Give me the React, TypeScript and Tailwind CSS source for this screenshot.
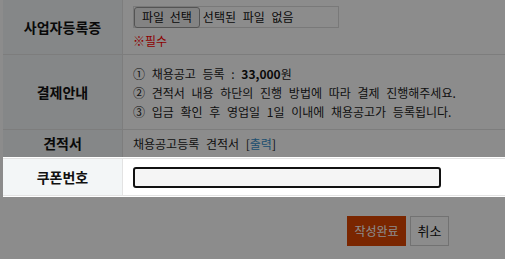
import React from "react";

export default function App() {
  const label =
    "w-[120px] shrink-0 border-r border-[#e3e3e3] bg-[#f3f6f7] flex items-center justify-center text-[14px] font-bold text-[#111] [word-spacing:0px]";
  return (
    <div className="w-[505px] h-[259px] overflow-hidden bg-white font-['Noto_Sans_CJK_KR',sans-serif] text-[12px] text-[#222] [word-spacing:4px]">
      <div className="ml-[3px]">
        {/* Row 1 */}
        <div className="flex h-[55px] border-b border-[#e3e3e3]">
          <div className={label}>사업자등록증</div>
          <div className="pl-[10px] pt-[6px]">
            <div className="flex h-[22px] w-[206px] items-center border border-[#dcdcdc]">
              <span className="flex h-[21px] items-center rounded-[3px] border border-[#9a9a9a] bg-[#efefef] px-[7px] text-[12px] text-[#111] [word-spacing:3px]">
                파일 선택
              </span>
              <span className="ml-[3px] text-[#111]">선택된 파일 없음</span>
            </div>
            <div className="mt-[6px] text-[12px] leading-[14px] text-[#ff0000]">※필수</div>
          </div>
        </div>
        {/* Row 2 */}
        <div className="flex h-[75px] border-b border-[#e3e3e3]">
          <div className={label}>결제안내</div>
          <div className="flex flex-col justify-center pl-[10px] leading-[19px]">
            <div>
              ① 채용공고 등록 : <b className="text-[#111]">33,000</b>원
            </div>
            <div>② 견적서 내용 하단의 진행 방법에 따라 결제 진행해주세요.</div>
            <div>③ 입금 확인 후 영업일 1일 이내에 채용공고가 등록됩니다.</div>
          </div>
        </div>
        {/* Row 3 */}
        <div className="flex h-[27px]">
          <div className={label}>견적서</div>
          <div className="flex items-center pl-[10px]">
            채용공고등록 견적서 [<span className="text-[#3590cc]">출력</span>]
          </div>
        </div>
        {/* Row 4 (highlighted) */}
        <div className="relative z-10 bg-white py-[1px] shadow-[0_0_0_5000px_rgba(0,0,0,0.45)]">
          <div className="flex h-[38px] border-y border-[#e3e3e3]">
            <div className={label}>쿠폰번호</div>
            <div className="flex items-center pl-[10px]">
              <input
                type="text"
                className="h-[21px] w-[308px] rounded-[3px] border-2 border-[#111] bg-[#f5f5f5] outline-none"
              />
            </div>
          </div>
        </div>
      </div>
      {/* Buttons */}
      <div className="mt-[19px] flex justify-end gap-[4px] pr-[56px]">
        <button className="flex h-[30px] w-[59px] items-center justify-center bg-[#de4500] text-[12px] text-white">
          작성완료
        </button>
        <button className="flex h-[30px] w-[39px] items-center justify-center border border-[#cfcfcf] bg-white text-[13px] text-[#111]">
          취소
        </button>
      </div>
    </div>
  );
}
